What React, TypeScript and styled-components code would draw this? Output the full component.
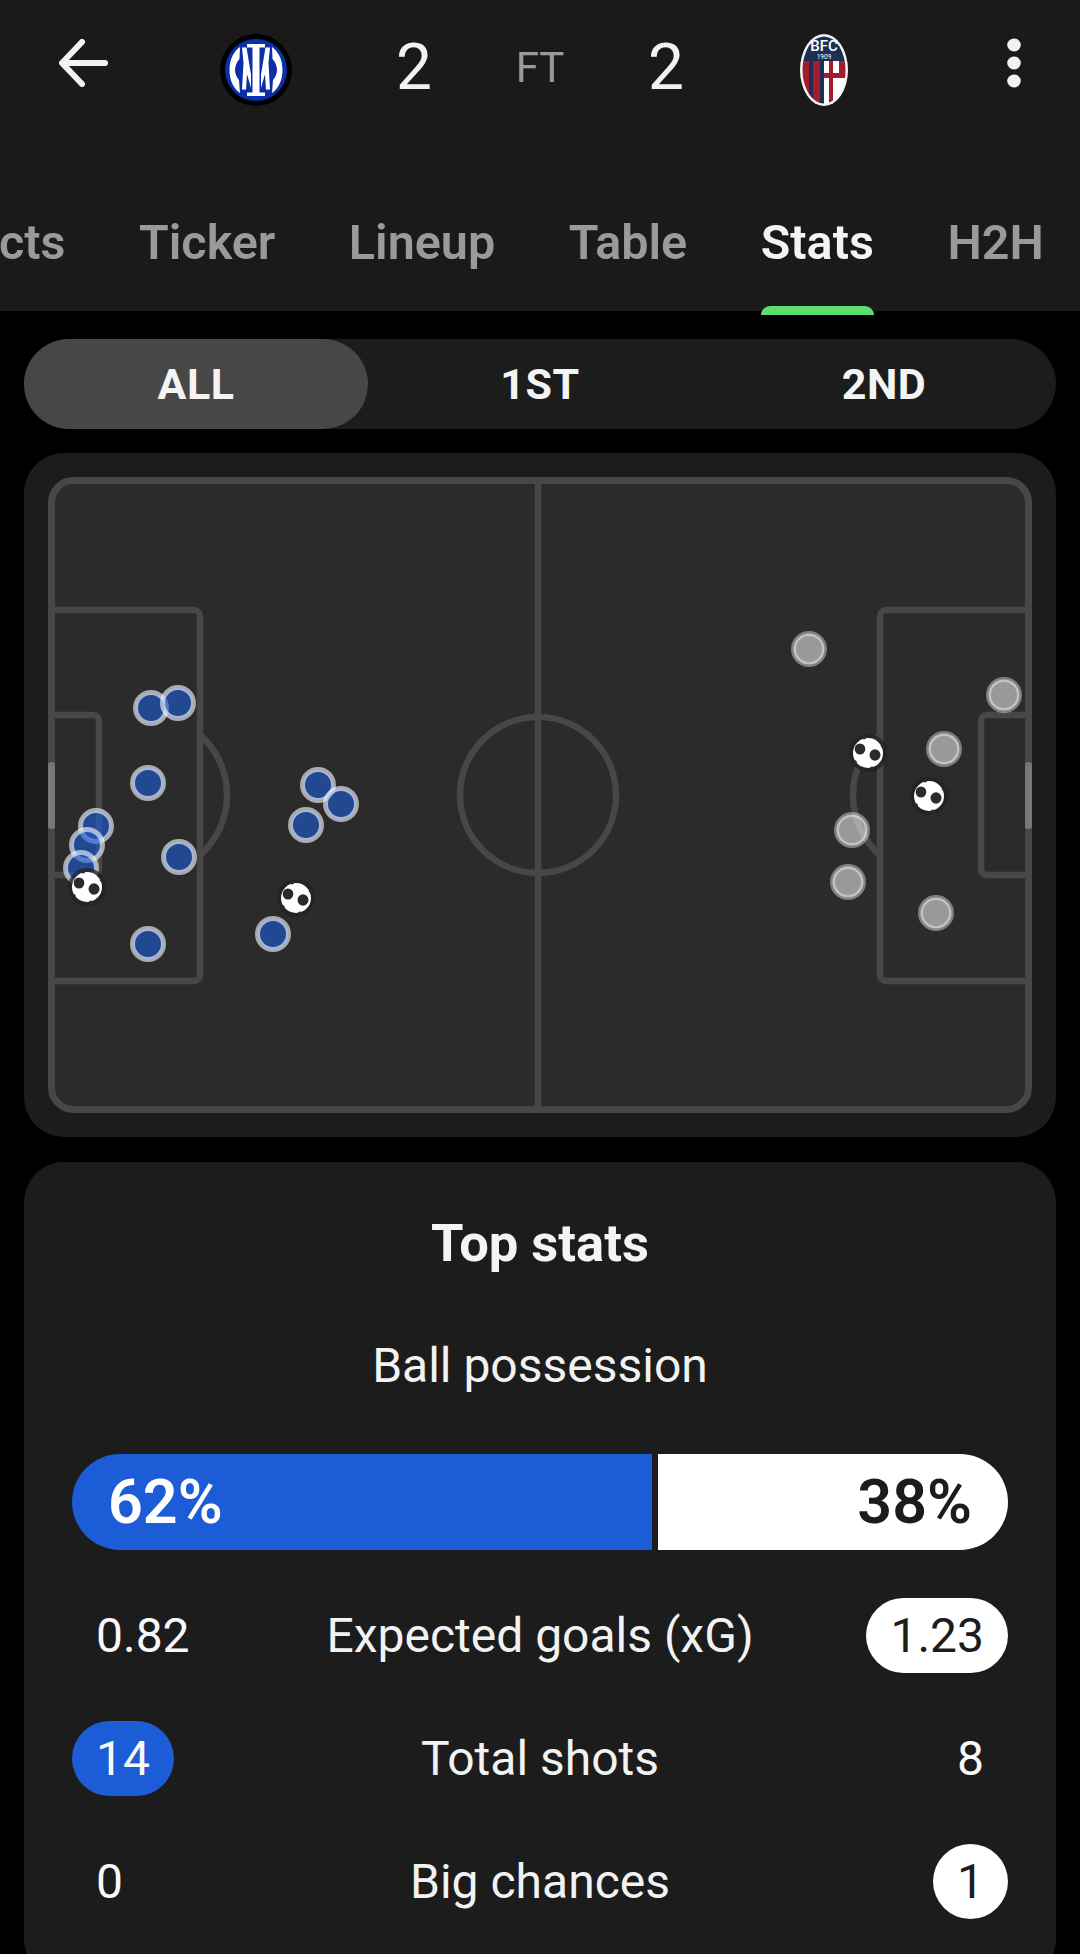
import React from "react";
import styled, { createGlobalStyle } from "styled-components";

const Global = createGlobalStyle`
  html, body { margin: 0; padding: 0; background: #000; }
  body { font-family: Roboto, "Liberation Sans", sans-serif; }
  * { box-sizing: border-box; }
`;

const Page = styled.div`
  width: 1080px;
  height: 1954px;
  overflow: hidden;
  background: #000;
`;

const Header = styled.header`
  height: 311px;
  background: #1a1a1a;
  display: flex;
  flex-direction: column;
`;

const TopRow = styled.div`
  flex: none;
  height: 136px;
  display: grid;
  grid-template-columns: 168px 176px 140px 112px 140px 176px 168px;
  align-items: center;
  justify-items: center;
`;

const BackButton = styled.svg`
  width: 50px;
  height: 48px;
  margin-bottom: 10px;
`;

const Crest = styled.svg`
  margin-top: 3px;
  display: block;
`;

const Score = styled.span`
  font-size: 64px;
  font-weight: 400;
  line-height: 1;
  color: #f2f2f2;
`;

const Status = styled.span`
  font-size: 42px;
  font-weight: 400;
  line-height: 1;
  color: #9a9a9a;
`;

const MenuDots = styled.svg`
  width: 16px;
  height: 50px;
  justify-self: end;
  margin: 0 58px 10px 0;
`;

const TabStrip = styled.nav`
  flex: none;
  display: flex;
  gap: 73.5px;
  margin: 65px 0 0 -53px;
  white-space: nowrap;
`;

const Tab = styled.div<{ $active?: boolean }>`
  position: relative;
  height: 110px;
  font-size: 48.5px;
  font-weight: 600;
  line-height: 84px;
  color: ${(p) => (p.$active ? "#f4f4f4" : "#9a9a9a")};
`;

const TabMark = styled.span`
  position: absolute;
  left: 0;
  right: 0;
  bottom: -4px;
  height: 9px;
  border-radius: 9px 9px 0 0;
  background: #5fde70;
`;

const Content = styled.main`
  display: flex;
  flex-direction: column;
  gap: 24px;
  padding: 28px 24px 0;
`;

const Segments = styled.div`
  height: 90px;
  border-radius: 45px;
  background: #1c1c1c;
  display: grid;
  grid-template-columns: repeat(3, 1fr);
`;

const Segment = styled.div<{ $active?: boolean }>`
  display: flex;
  align-items: center;
  justify-content: center;
  border-radius: 45px;
  font-size: 43px;
  font-weight: 700;
  letter-spacing: 0.5px;
  color: #f4f4f4;
  background: ${(p) => (p.$active ? "#474747" : "transparent")};
`;

const PitchCard = styled.section`
  height: 684px;
  padding: 24px;
  border-radius: 40px;
  background: #1c1c1c;
`;

const PitchSvg = styled.svg`
  display: block;
  width: 984px;
  height: 636px;
`;

const StatsCard = styled.section`
  margin-top: 1px;
  padding: 49px 48px 60px;
  border-radius: 40px;
  background: #1c1c1c;
  display: flex;
  flex-direction: column;
`;

const CardTitle = styled.h2`
  margin: 0;
  height: 64px;
  line-height: 64px;
  text-align: center;
  font-size: 52.5px;
  font-weight: 700;
  color: #f4f4f4;
`;

const StatTitle = styled.div`
  margin-top: 59px;
  height: 64px;
  line-height: 64px;
  text-align: center;
  font-size: 48px;
  color: #f2f2f2;
`;

const PossessionBar = styled.div`
  margin-top: 56px;
  height: 96px;
  display: flex;
  gap: 6px;
`;

const PossessionPart = styled.div<{ $home?: boolean; $share?: number }>`
  flex: ${(p) => (p.$share ? `0 0 ${p.$share}%` : "1 1 0")};
  display: flex;
  align-items: center;
  justify-content: ${(p) => (p.$home ? "flex-start" : "flex-end")};
  padding: 0 36px;
  font-size: 61px;
  font-weight: 600;
  color: ${(p) => (p.$home ? "#fff" : "#1c1c1c")};
  background: ${(p) => (p.$home ? "#1c5cd6" : "#fff")};
  border-radius: ${(p) => (p.$home ? "48px 0 0 48px" : "0 48px 48px 0")};
`;

const Rows = styled.div`
  margin-top: 48px;
  display: flex;
  flex-direction: column;
  gap: 48px;
`;

const Row = styled.div`
  display: grid;
  grid-template-columns: 1fr auto 1fr;
  align-items: center;
  height: 75px;
  font-size: 48px;
  color: #f2f2f2;
`;

const Value = styled.span<{ $tone?: "home" | "away"; $right?: boolean }>`
  height: 75px;
  min-width: 75px;
  padding: 0 24px;
  border-radius: 38px;
  display: inline-flex;
  align-items: center;
  justify-content: center;
  justify-self: ${(p) => (p.$right ? "end" : "start")};
  color: ${(p) => (p.$tone === "away" ? "#1c1c1c" : "#f8f8f8")};
  background: ${(p) =>
    p.$tone === "home" ? "#1c5cd6" : p.$tone === "away" ? "#fff" : "transparent"};
`;

const LINE = "#474747";

const Arrow = () => (
  <BackButton viewBox="0 0 50 48" fill="none" stroke="#f2f2f2" strokeWidth="6" strokeLinecap="round" strokeLinejoin="round">
    <path d="M46 24H4" />
    <path d="M23 3L3 24l20 21" />
  </BackButton>
);

const Dots = () => (
  <MenuDots viewBox="0 0 16 50" fill="#f2f2f2">
    <ellipse cx="8" cy="7" rx="6.8" ry="6.4" />
    <ellipse cx="8" cy="25" rx="6.8" ry="6.4" />
    <ellipse cx="8" cy="43" rx="6.8" ry="6.4" />
  </MenuDots>
);

const InterCrest = () => (
  <Crest width="72" height="72" viewBox="0 0 72 72">
    <circle cx="36" cy="36" r="36" fill="#000" />
    <circle cx="36" cy="36" r="31" fill="#0b2fa8" />
    <g fill="#fff">
      <path d="M27 10h18v3.5h-5.5v45H45V62H27v-3.500h5.500v-45H27z" />
      <path d="M20 13C13 18 9.500 26.500 9.500 36S13 54 20 59L19 46C16.500 43 15 39.500 15 36s1.500-8 4.500-11z" />
      <path d="M52 13C59 18 62.500 26.500 62.500 36S59 54 52 59L53 46C55.500 43 57 39.500 57 36s-1.500-8-4.500-11z" />
      <path d="M22 13.500h4.500l4.500 27v13.500l-4-14-1 15.500h-4l1.500-27z" />
      <path d="M50 13.500h-4.500l-4.500 27v13.500l4-14 1 15.500h4l-1.500-27z" />
    </g>
  </Crest>
);

const BolognaCrest = () => (
  <Crest width="48" height="72" viewBox="0 0 48 72">
    <defs>
      <clipPath id="bfc-clip">
        <ellipse cx="24" cy="36" rx="21.500" ry="33.500" />
      </clipPath>
    </defs>
    <ellipse cx="24" cy="36" rx="24" ry="36" fill="#f4f4f4" />
    <g clipPath="url(#bfc-clip)">
      <rect x="0" y="0" width="48" height="72" fill="#fff" />
      <rect x="2" y="26" width="7" height="46" fill="#a51c30" />
      <rect x="9" y="26" width="4" height="46" fill="#1d2f52" />
      <rect x="13" y="26" width="7" height="46" fill="#a51c30" />
      <rect x="20" y="26" width="4" height="46" fill="#1d2f52" />
      <rect x="29" y="26" width="4" height="46" fill="#a51c30" />
      <rect x="24" y="39" width="24" height="5" fill="#a51c30" />
      <rect x="39" y="26" width="7" height="13" fill="#a51c30" />
      <rect x="0" y="0" width="48" height="27" fill="#1d2f52" />
    </g>
    <text x="24" y="17" textAnchor="middle" fontFamily="Roboto, sans-serif" fontSize="15" fontWeight="500" fill="#fff">BFC</text>
    <text x="24" y="24.500" textAnchor="middle" fontFamily="Roboto, sans-serif" fontSize="6.500" fill="#fff">1909</text>
  </Crest>
);

type Pt = [number, number];
const OX = 48;
const OY = 477;
const home: Pt[] = [
  [151, 708], [178, 703], [148, 783], [96, 826], [87, 845], [81, 868],
  [179, 857], [148, 944], [318, 785], [341, 804], [306, 825], [273, 934],
];
const away: Pt[] = [
  [809, 649], [1004, 695], [944, 749], [852, 830], [848, 882], [936, 913],
];
const balls: Pt[] = [[87, 887], [296, 898], [868, 753], [929, 796]];

const Ball = ({ x, y }: { x: number; y: number }) => (
  <g transform={`translate(${x - OX} ${y - OY})`}>
    <circle r="19" fill="#222" opacity="0.75" />
    <circle r="15" fill="#fff" />
    <ellipse cx="-8" cy="-4" rx="5.300" ry="5.500" fill="#2b2b2b" />
    <ellipse cx="7" cy="2" rx="5.500" ry="5.800" fill="#2b2b2b" />
    <circle cx="-4" cy="-15.500" r="2" fill="#2b2b2b" />
    <circle cx="4" cy="15.500" r="2" fill="#2b2b2b" />
    <circle cx="14.500" cy="-7" r="1.800" fill="#2b2b2b" />
    <circle cx="-13" cy="9" r="1.800" fill="#2b2b2b" />
  </g>
);

const Pitch = () => (
  <PitchSvg viewBox="0 0 984 636">
    <rect x="3.500" y="3.500" width="977" height="629" rx="22" fill="#2b2b2b" stroke={LINE} strokeWidth="7" />
    <g fill="none" stroke={LINE} strokeWidth="6.500">
      <path d="M490 5V631" />
      <circle cx="490" cy="318" r="78" />
      <path d="M7 133H146a6 6 0 0 1 6 6V498a6 6 0 0 1 -6 6H7" />
      <path d="M7 238H45a6 6 0 0 1 6 6V392a6 6 0 0 1 -6 6H7" />
      <path d="M152 258A80 80 0 0 1 152 378" />
      <path d="M977 133H838a6 6 0 0 0 -6 6V498a6 6 0 0 0 6 6H977" />
      <path d="M977 238H939a6 6 0 0 0 -6 6V392a6 6 0 0 0 6 6H977" />
      <path d="M832 258A80 80 0 0 0 832 378" />
    </g>
    <rect x="0" y="285" width="7" height="67" rx="3" fill="#777" />
    <rect x="977" y="285" width="7" height="67" rx="3" fill="#777" />
    {home.map(([x, y], i) => (
      <circle key={`h${i}`} cx={x - OX} cy={y - OY} r="15.500" fill="rgba(28,92,214,.6)" stroke="rgba(255,255,255,.6)" strokeWidth="5" />
    ))}
    {away.map(([x, y], i) => (
      <circle key={`a${i}`} cx={x - OX} cy={y - OY} r="15.500" fill="rgba(255,255,255,.52)" stroke="rgba(255,255,255,.4)" strokeWidth="5" />
    ))}
    {balls.map(([x, y], i) => (
      <Ball key={`b${i}`} x={x} y={y} />
    ))}
  </PitchSvg>
);

const tabs = ["Facts", "Ticker", "Lineup", "Table", "Stats", "H2H"];
const stats = [
  { label: "Expected goals (xG)", home: "0.82", away: "1.23", lead: "away" as const },
  { label: "Total shots", home: "14", away: "8", lead: "home" as const },
  { label: "Big chances", home: "0", away: "1", lead: "away" as const },
];

export default function App() {
  return (
    <Page>
      <Global />
      <Header>
        <TopRow>
          <Arrow />
          <InterCrest />
          <Score>2</Score>
          <Status>FT</Status>
          <Score>2</Score>
          <BolognaCrest />
          <Dots />
        </TopRow>
        <TabStrip>
          {tabs.map((t) => (
            <Tab key={t} $active={t === "Stats"}>
              {t}
              {t === "Stats" && <TabMark />}
            </Tab>
          ))}
        </TabStrip>
      </Header>
      <Content>
        <Segments>
          <Segment $active>ALL</Segment>
          <Segment>1ST</Segment>
          <Segment>2ND</Segment>
        </Segments>
        <PitchCard>
          <Pitch />
        </PitchCard>
        <StatsCard>
          <CardTitle>Top stats</CardTitle>
          <StatTitle>Ball possession</StatTitle>
          <PossessionBar>
            <PossessionPart $home $share={62}>62%</PossessionPart>
            <PossessionPart>38%</PossessionPart>
          </PossessionBar>
          <Rows>
            {stats.map((s) => (
              <Row key={s.label}>
                <Value $tone={s.lead === "home" ? "home" : undefined}>{s.home}</Value>
                <span>{s.label}</span>
                <Value $right $tone={s.lead === "away" ? "away" : undefined}>{s.away}</Value>
              </Row>
            ))}
          </Rows>
        </StatsCard>
      </Content>
    </Page>
  );
}
